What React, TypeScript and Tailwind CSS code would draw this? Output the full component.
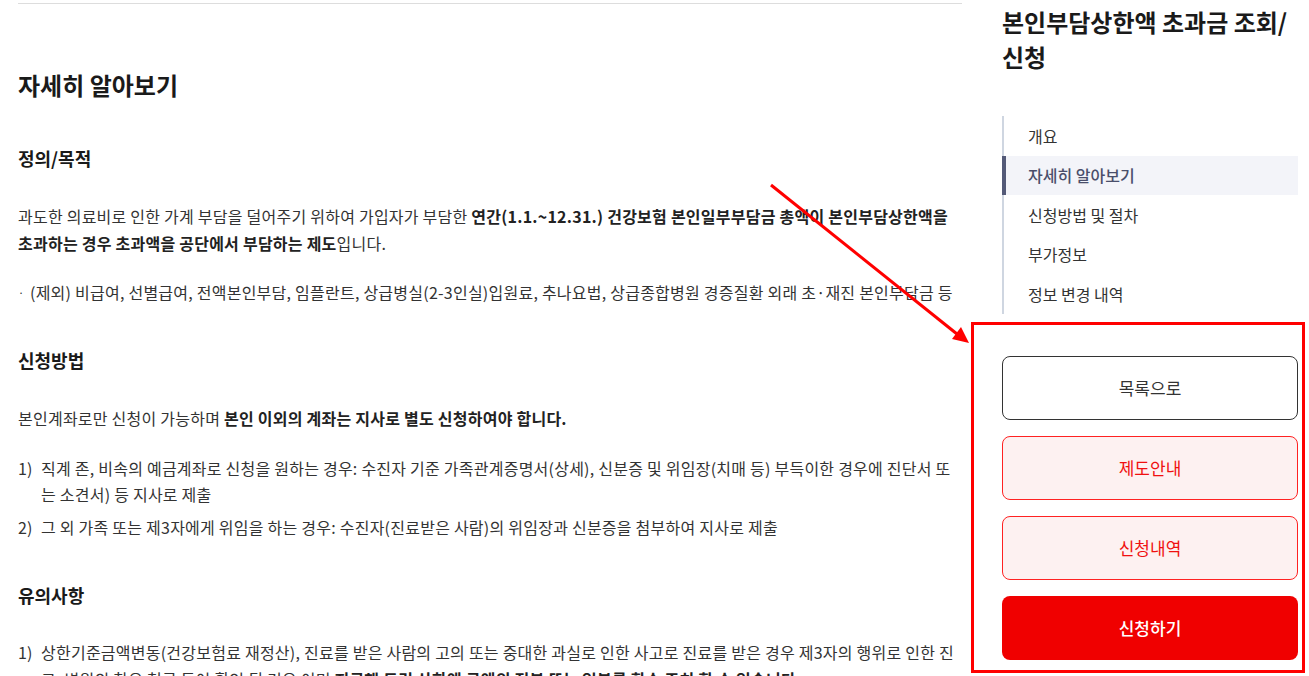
const navItems = ["개요", "자세히 알아보기", "신청방법 및 절차", "부가정보", "정보 변경 내역"];

const Heading = ({ children, className = "" }: { children: React.ReactNode; className?: string }) => (
  <h3 className={`text-[18px] leading-[26px] font-bold text-[#1a1a1a] ${className}`}>{children}</h3>
);

const NumItem = ({ n, children, className = "" }: { n: string; children: React.ReactNode; className?: string }) => (
  <li className={`flex ${className}`}>
    <span className="w-[23px] shrink-0">{n}</span>
    <span>{children}</span>
  </li>
);

export default function App() {
  return (
    <div className="relative flex bg-white font-['Noto_Sans_CJK_KR','Noto_Sans',sans-serif] text-[#333]">
      <main className="w-[944px] ml-[18px] shrink-0">
        <div className="mt-[3px] h-px bg-[#dddddd]" />
        <h2 className="mt-[66px] text-[24px] leading-[30px] font-bold text-[#1a1a1a]">자세히 알아보기</h2>

        <Heading className="mt-[45px]">정의/목적</Heading>
        <p className="mt-[32px] text-[16px] leading-[27px] tracking-[0.015em]">
          과도한 의료비로 인한 가계 부담을 덜어주기 위하여 가입자가 부담한{" "}
          <b className="font-bold text-[#222]">
            연간(1.1.~12.31.) 건강보험 본인일부부담금 총액이 본인부담상한액을 초과하는 경우 초과액을 공단에서 부담하는 제도
          </b>
          입니다.
        </p>
        <ul className="mt-[22px] text-[16px] leading-[27px] tracking-[0.015em]">
          <li className="flex">
            <span className="w-[12px] shrink-0 text-[11px]">·</span>
            <span>(제외) 비급여, 선별급여, 전액본인부담, 임플란트, 상급병실(2-3인실)입원료, 추나요법, 상급종합병원 경증질환 외래 초·재진 본인부담금 등</span>
          </li>
        </ul>

        <Heading className="mt-[41px]">신청방법</Heading>
        <p className="mt-[32px] text-[16px] leading-[27px] tracking-[0.015em]">
          본인계좌로만 신청이 가능하며 <b className="font-bold text-[#222]">본인 이외의 계좌는 지사로 별도 신청하여야 합니다.</b>
        </p>
        <ol className="mt-[23px] text-[16px] leading-[26px] tracking-[0.015em]">
          <NumItem n="1)">
            직계 존, 비속의 예금계좌로 신청을 원하는 경우: 수진자 기준 가족관계증명서(상세), 신분증 및 위임장(치매 등) 부득이한 경우에 진단서 또는 소견서) 등 지사로 제출
          </NumItem>
          <NumItem n="2)" className="mt-[7px]">
            그 외 가족 또는 제3자에게 위임을 하는 경우: 수진자(진료받은 사람)의 위임장과 신분증을 첨부하여 지사로 제출
          </NumItem>
        </ol>

        <Heading className="mt-[42px]">유의사항</Heading>
        <ol className="mt-[31px] text-[16px] leading-[27px] tracking-[0.015em]">
          <NumItem n="1)">
            <span>
              상한기준금액변동(건강보험료 재정산), 진료를 받은 사람의 고의 또는 중대한 과실로 인한 사고로 진료를 받은 경우 제3자의 행위로 인한 진료, 병원의 착오 청구 등이 확인 된 경우 이미{" "}
              <b className="font-bold text-[#222]">지급해 드린 상한액 금액의 전부 또는 일부를 환수 조치 할 수 있습니다.</b>
            </span>
          </NumItem>
        </ol>
      </main>

      <aside className="w-[296px] ml-[40px] shrink-0">
        <h1 className="mt-[4px] text-[24px] leading-[35px] font-bold text-[#1a1a1a]">본인부담상한액 초과금 조회/신청</h1>

        <nav className="mt-[42px] border-l-2 border-[#cfd6e1]">
          {navItems.map((item) =>
            item === "자세히 알아보기" ? (
              <div
                key={item}
                className="-ml-[2px] h-[39.5px] flex items-center border-l-4 border-[#545a78] bg-[#f3f4f9] pl-[22px] text-[16px] font-medium text-[#4a4f6b]"
              >
                {item}
              </div>
            ) : (
              <div key={item} className="h-[39.5px] flex items-center pl-[24px] text-[16px] text-[#333]">
                {item}
              </div>
            )
          )}
        </nav>

        <div className="mt-[8px] -ml-[31px] -mr-[7px] border-[3px] border-[#ff0000] pt-[31px] pl-[28px] pr-[4px] pb-[10px] flex flex-col gap-4">
          <button className="h-16 rounded-lg border border-[#333] bg-white text-[17px] text-[#333]">목록으로</button>
          <button className="h-16 rounded-lg border border-[#f22] bg-[#fdf1f1] text-[17px] text-[#f01010]">제도안내</button>
          <button className="h-16 rounded-lg border border-[#f22] bg-[#fdf1f1] text-[17px] text-[#f01010]">신청내역</button>
          <button className="h-16 rounded-lg bg-[#f00000] text-[17px] font-medium text-white">신청하기</button>
        </div>
      </aside>

      <svg className="pointer-events-none absolute left-0 top-0" width="1309" height="676" viewBox="0 0 1309 676">
        <line x1="771" y1="185" x2="957" y2="334" stroke="#ff0000" strokeWidth="3" />
        <polygon points="969,343 952,339 961,327" fill="#ff0000" />
      </svg>
    </div>
  );
}
